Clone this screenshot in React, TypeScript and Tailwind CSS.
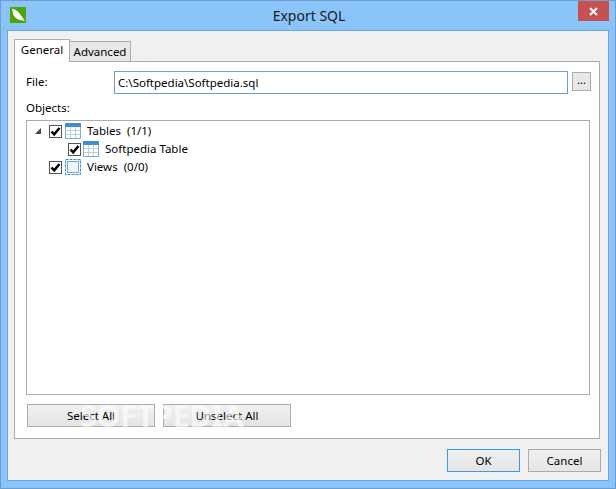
const font = "[font-family:'Noto_Sans','Open_Sans',sans-serif]"

const Check = () => (
  <span className="flex h-[13px] w-[13px] shrink-0 items-center justify-center border border-[#555] bg-white">
    <svg width="11" height="11" viewBox="0 0 11 11">
      <path d="M1.5 5.5 L4.2 8.3 L9.5 2" fill="none" stroke="#000" strokeWidth="2.5" />
    </svg>
  </span>
)

const TableIcon = () => (
  <svg width="16" height="16" viewBox="0 0 16 16" className="shrink-0">
    <rect x="0.5" y="0.5" width="15" height="15" fill="#fff" stroke="#7fb0dc" />
    <rect x="0" y="0" width="16" height="4" fill="#3d8fd6" />
    <path d="M5.5 4v11M10.5 4v11M1 7.5h14M1 11.5h14" stroke="#b9cfe4" fill="none" />
  </svg>
)

const ViewIcon = () => (
  <svg width="16" height="16" viewBox="0 0 16 16" className="shrink-0">
    <rect x="0.5" y="0.5" width="15" height="15" fill="none" stroke="#3d8fd6" strokeDasharray="3 1" />
    <rect x="2.5" y="2.5" width="11" height="11" fill="#eef5fc" stroke="#6fa8dc" />
  </svg>
)

const Btn = ({ label, className }: { label: string; className: string }) => (
  <button className={`flex h-[23px] items-center justify-center border bg-gradient-to-b from-[#f0f0f0] to-[#e5e5e5] text-[11.5px] text-black ${className}`}>
    {label}
  </button>
)

export default function App() {
  return (
    <div className={`relative flex h-[489px] w-[616px] flex-col overflow-hidden border border-[#6c9fcf] bg-[#8ac4fa] ${font}`}>
      <div className="relative flex h-[29px] shrink-0 items-start justify-between">
        <div className="ml-[9px] mt-[6px] flex h-[16px] w-[16px] items-center justify-center bg-[#4ea600]">
          <svg width="16" height="16" viewBox="0 0 16 16">
            <path d="M2 2 C5 2 8 4 10 7 L15 14 L10 13 C6 12 3 9 3 6Z" fill="#fff" />
          </svg>
        </div>
        <span className="mt-[5px] pl-[14px] text-[14px] leading-[20px] text-[#1a1a1a]">Export SQL</span>
        <div className="mr-[6px] flex h-[20px] w-[31px] items-center justify-center bg-[#c75050]">
          <svg width="9" height="9" viewBox="0 0 9 9">
            <path d="M1 1 L8 8 M8 1 L1 8" stroke="#fff" strokeWidth="2" />
          </svg>
        </div>
      </div>

      <div className="mx-[6px] flex h-[451px] flex-col border border-[#6fa5d6] bg-[#f0f0f0] px-[6px] pt-[8px] text-[11.5px] text-black">
        <div className="flex h-[22px] items-end">
          <div className="z-10 -mb-px flex h-[23px] w-[56px] items-center justify-center border border-b-0 border-[#acacac] bg-white pb-[2px]">General</div>
          <div className="flex h-[20px] w-[61px] items-center justify-center border border-b-0 border-l-0 border-[#acacac] bg-[#e8e8e8]">Advanced</div>
        </div>

        <div className="flex h-[378px] w-[586px] flex-col border border-[#acacac] bg-white pl-[11px] pr-[8px] pt-[9px]">
          <div className="flex items-center">
            <span className="mb-[2px] w-[88px]">File:</span>
            <div className="flex h-[23px] w-[454px] items-center border border-[#6a9fd4] px-[3px]">C:\Softpedia\Softpedia.sql</div>
            <button className="mb-[2px] ml-[4px] flex h-[19px] w-[19px] items-center justify-center border border-[#acacac] bg-[#e8e8e8] pb-[3px]">...</button>
          </div>
          <div className="mt-[3px] h-[22px] leading-[22px]">Objects:</div>
          <div className="mt-[1px] flex h-[275px] w-[564px] flex-col border border-[#acacac] pt-[1px]">
            <div className="flex h-[18px] items-center pl-[7px]">
              <svg width="8" height="8" viewBox="0 0 8 8" className="mr-[7px] shrink-0">
                <path d="M7 1 V7 H1Z" fill="#444" />
              </svg>
              <Check />
              <span className="ml-[3px]"><TableIcon /></span>
              <span className="ml-[6px] whitespace-pre">Tables  (1/1)</span>
            </div>
            <div className="flex h-[18px] items-center pl-[41px]">
              <Check />
              <span className="ml-[2px]"><TableIcon /></span>
              <span className="ml-[6px]">Softpedia Table</span>
            </div>
            <div className="flex h-[18px] items-center pl-[22px]">
              <Check />
              <span className="ml-[3px]"><ViewIcon /></span>
              <span className="ml-[6px] whitespace-pre">Views  (0/0)</span>
            </div>
          </div>
          <div className="mt-[9px] flex gap-[8px] pl-[1px]">
            <Btn label="Select All" className="w-[128px] border-[#acacac]" />
            <Btn label="Unselect All" className="w-[128px] border-[#acacac]" />
          </div>
        </div>

        <div className="mr-[1px] mt-[10px] flex justify-end gap-[8px]">
          <Btn label="OK" className="w-[73px] border-[#3c9be8]" />
          <Btn label="Cancel" className="w-[73px] border-[#acacac]" />
        </div>
      </div>

      <span className="absolute left-[79px] top-[393px] text-[30px] font-bold leading-[44px] text-white/60">SOFTPEDIA</span>
    </div>
  )
}
